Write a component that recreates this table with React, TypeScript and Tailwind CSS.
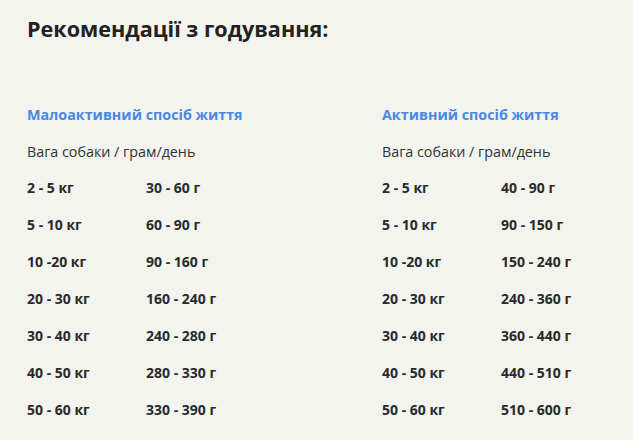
const lowActive = [
  ["2 - 5 кг", "30 - 60 г"],
  ["5 - 10 кг", "60 - 90 г"],
  ["10 -20 кг", "90 - 160 г"],
  ["20 - 30 кг", "160 - 240 г"],
  ["30 - 40 кг", "240 - 280 г"],
  ["40 - 50 кг", "280 - 330 г"],
  ["50 - 60 кг", "330 - 390 г"],
];

const active = [
  ["2 - 5 кг", "40 - 90 г"],
  ["5 - 10 кг", "90 - 150 г"],
  ["10 -20 кг", "150 - 240 г"],
  ["20 - 30 кг", "240 - 360 г"],
  ["30 - 40 кг", "360 - 440 г"],
  ["40 - 50 кг", "440 - 510 г"],
  ["50 - 60 кг", "510 - 600 г"],
];

const Column = ({ title, rows }: { title: string; rows: string[][] }) => (
  <div>
    <h3 className="text-[14.3px] font-bold leading-[20px] text-[#4a88e6]">{title}</h3>
    <p className="mt-[17px] text-[14.3px] leading-[20px] text-[#333]">Вага собаки / грам/день</p>
    <div className="mt-[16px] flex flex-col gap-[17px]">
      {rows.map(([weight, grams], i) => (
        <div key={i} className="flex text-[14px] font-bold leading-[20px] text-[#2a2a2a]">
          <span className="w-[119px]">{weight}</span>
          <span>{grams}</span>
        </div>
      ))}
    </div>
  </div>
);

export default function App() {
  return (
    <div className="min-h-[440px] w-[633px] bg-[#f4f4ee] px-[27px] pt-[14px] font-['Open_Sans',sans-serif]">
      <h2 className="text-[21.6px] font-bold leading-[30px] text-[#222]">Рекомендації з годування:</h2>
      <div className="mt-[61px] grid grid-cols-[355px_1fr]">
        <Column title="Малоактивний спосіб життя" rows={lowActive} />
        <Column title="Активний спосіб життя" rows={active} />
      </div>
    </div>
  );
}
